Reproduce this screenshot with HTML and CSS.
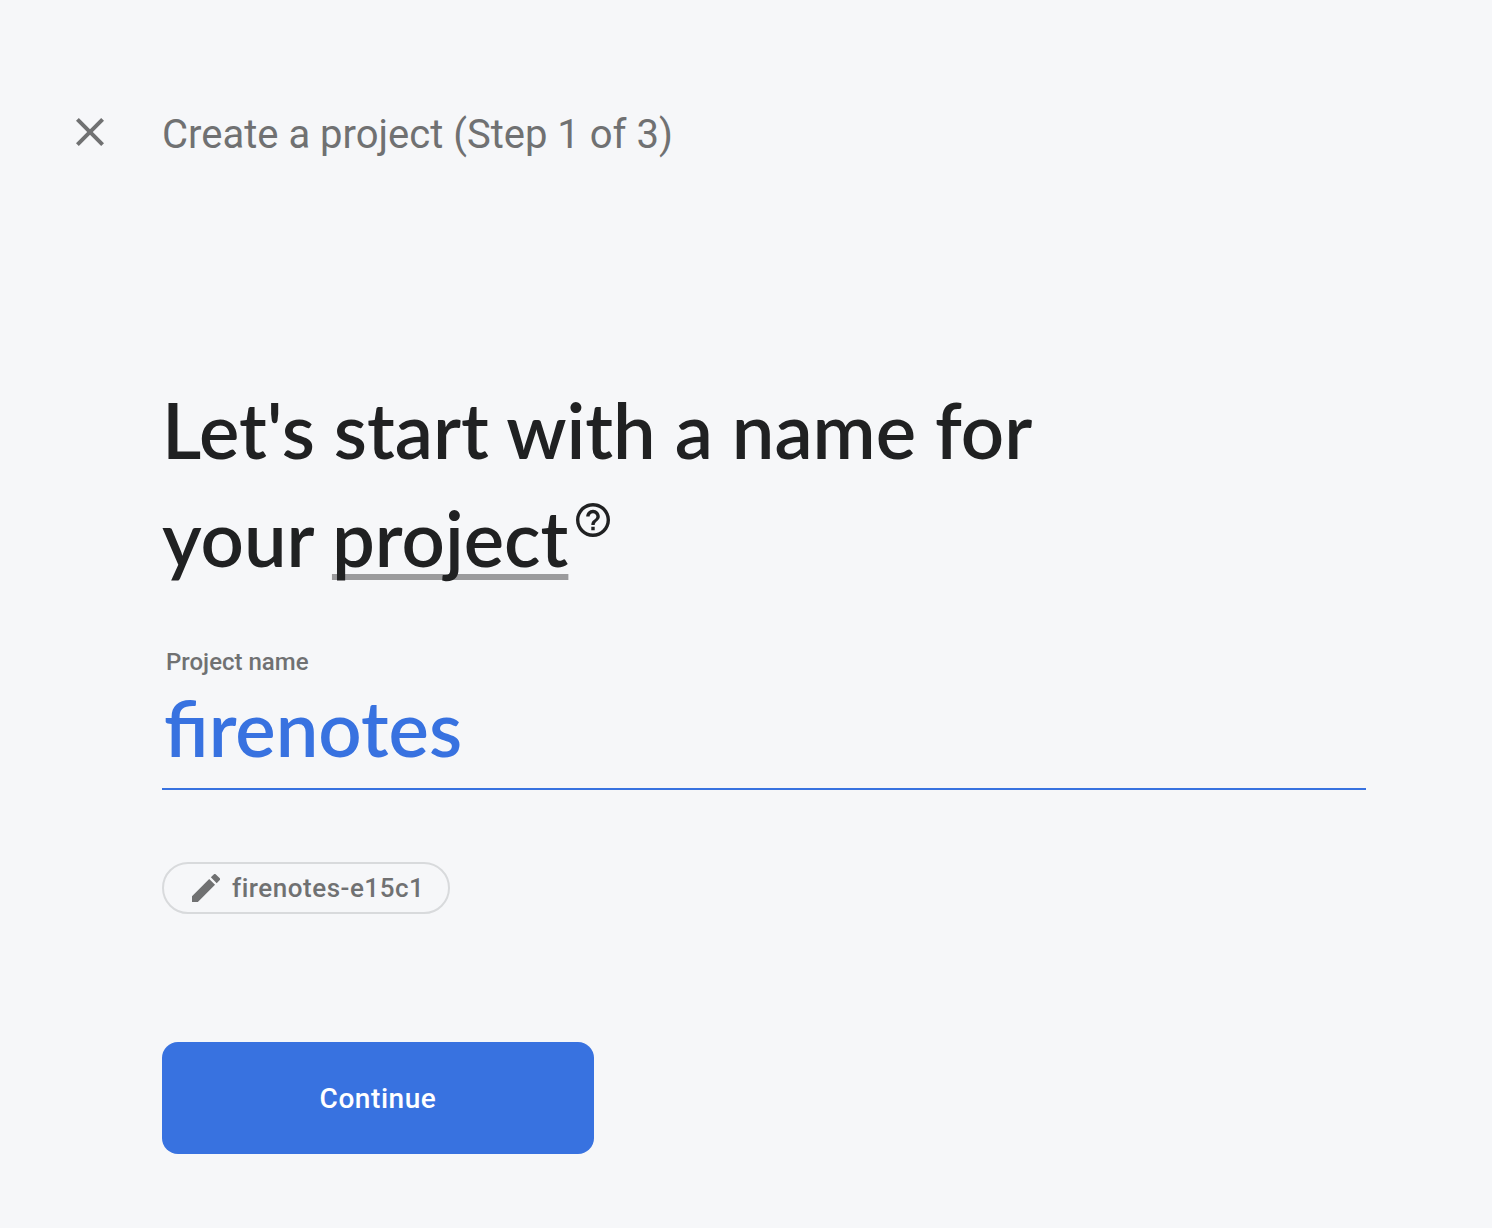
FILE: index.html
```html
<!DOCTYPE html>
<html lang="en">
<head>
<meta charset="utf-8">
<title>Create a project</title>
<link rel="stylesheet" href="styles.css">
</head>
<body>
<div class="page">
  <header class="topbar">
    <button class="close" type="button" aria-label="Close">
      <svg viewBox="5 5 14 14" width="28" height="28"><path fill="currentColor" d="M19 6.41L17.590 5 12 10.590 6.410 5 5 6.410 10.590 12 5 17.590 6.410 19 12 13.410 17.590 19 19 17.590 13.410 12z"/></svg>
    </button>
    <p class="step">Create a project (Step 1 of 3)</p>
  </header>
  <main>
    <form class="form">
      <h1 class="title">Let's start with a name for<br>your <span class="term">project</span><button class="help" type="button" aria-label="What is a project?"><svg viewBox="2 2 20 20" width="34" height="34"><path fill="currentColor" d="M11 18h2v-2h-2v2zm1-16C6.480 2 2 6.480 2 12s4.480 10 10 10 10-4.480 10-10S17.520 2 12 2zm0 18c-4.410 0-8-3.590-8-8s3.590-8 8-8 8 3.590 8 8-3.590 8-8 8zm0-14c-2.210 0-4 1.790-4 4h2c0-1.100.9-2 2-2s2 .9 2 2c0 2-3 1.750-3 5h2c0-2.250 3-2.500 3-5 0-2.210-1.790-4-4-4z"/></svg></button></h1>
      <div class="field">
        <label class="label" for="name">Project name</label>
        <input class="input" id="name" type="text" value="firenotes" spellcheck="false" autocomplete="off">
      </div>
      <button class="chip" type="button">
        <svg viewBox="3 3 18 18" width="28" height="28"><path fill="currentColor" d="M3 17.250V21h3.750L17.810 9.940l-3.750-3.750L3 17.250zM20.710 7.040a1 1 0 0 0 0-1.410l-2.340-2.340a1 1 0 0 0-1.410 0l-1.830 1.830 3.750 3.750 1.830-1.830z"/></svg>
        <span>firenotes-e15c1</span>
      </button>
      <button class="submit" type="submit">Continue</button>
    </form>
  </main>
</div>
</body>
</html>
```
FILE: styles.css
```css
* {
  box-sizing: border-box;
}

body {
  margin: 0;
  background: #f6f7f9;
  color: #202122;
  font-family: Roboto, sans-serif;
}

button {
  margin: 0;
  padding: 0;
  border: 0;
  background: none;
  color: inherit;
  font: inherit;
  cursor: pointer;
}

svg {
  display: block;
}

.page {
  padding: 108px 126px 72px 76px;
}

.topbar {
  display: flex;
  align-items: flex-start;
  gap: 58px;
  color: #707172;
}

.close {
  padding-top: 10px;
}

.step {
  margin: 0;
  font-size: 40px;
  line-height: 54px;
}

.form {
  display: flex;
  flex-direction: column;
  align-items: flex-start;
  padding: 214px 0 0 86px;
}

.title {
  margin: 0;
  font-family: "Google Sans", "Product Sans", Lato, sans-serif;
  font-size: 76px;
  font-weight: 600;
  line-height: 108px;
}

.term {
  text-decoration: underline;
  text-decoration-color: #9b9b9d;
  text-decoration-thickness: 6px;
  text-decoration-skip-ink: none;
  text-underline-offset: 7px;
}

.help {
  margin-left: 8px;
  vertical-align: 30px;
}

.field {
  display: flex;
  flex-direction: column;
  align-self: stretch;
  margin-top: 56px;
  border-bottom: 2px solid #3872e0;
}

.label {
  padding-left: 4px;
  color: #707172;
  font-size: 24px;
  font-weight: 500;
  line-height: 28px;
}

.input {
  width: 100%;
  height: 112px;
  padding: 0 2px 10px;
  border: 0;
  outline: 0;
  background: none;
  color: #3872e0;
  font-family: "Google Sans", "Product Sans", Lato, sans-serif;
  font-size: 76px;
  font-weight: 600;
}

.chip {
  display: flex;
  align-items: center;
  gap: 12px;
  height: 52px;
  margin-top: 72px;
  padding: 0 24px 0 28px;
  border: 2px solid #d8dadc;
  border-radius: 26px;
  color: #707172;
  font-size: 26px;
  font-weight: 500;
  letter-spacing: 0.02em;
}

.submit {
  width: 432px;
  max-width: 100%;
  height: 112px;
  margin-top: 128px;
  border-radius: 16px;
  background: #3872e0;
  color: #fff;
  font-size: 28px;
  font-weight: 500;
  letter-spacing: 0.02em;
}
```
